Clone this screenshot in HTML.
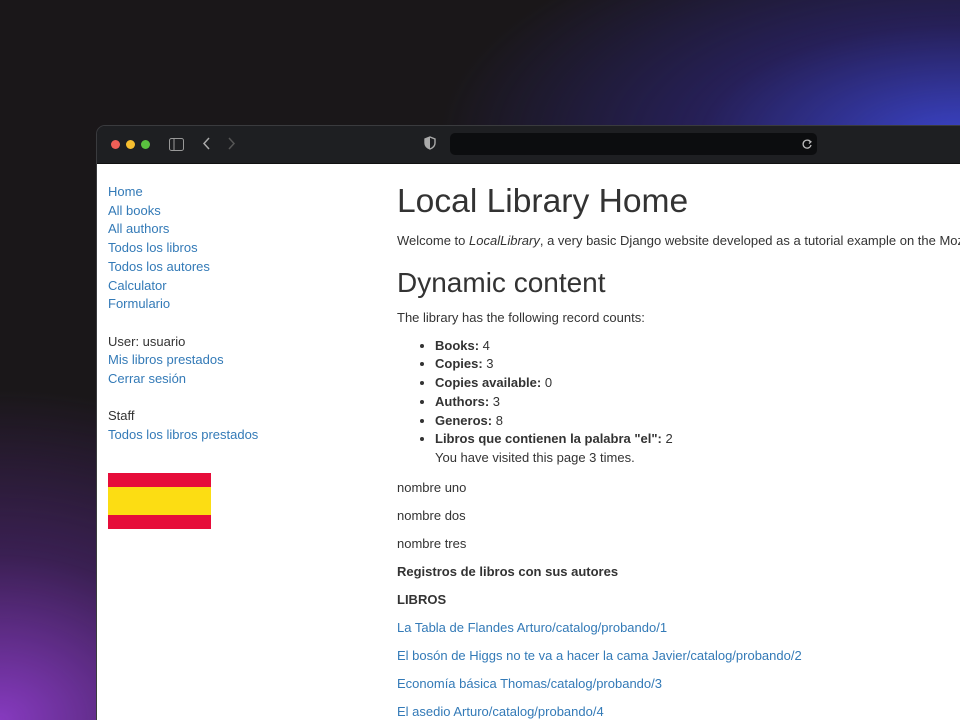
<!DOCTYPE html>
<html><head><meta charset="utf-8"><style>
*{box-sizing:border-box}
html,body{margin:0;width:960px;height:720px;overflow:hidden}
body{font-family:"Liberation Sans",sans-serif;font-size:13px;line-height:18.7px;color:#333;
background:
radial-gradient(ellipse 420px 330px at 0px 720px, rgba(140,60,200,0.95), rgba(90,40,140,0.5) 50%, rgba(0,0,0,0) 100%),
radial-gradient(ellipse 520px 230px at 960px 140px, rgba(60,70,210,0.95), rgba(50,40,150,0.5) 50%, rgba(0,0,0,0) 100%),
#1a1719;position:relative}
.win{position:absolute;left:96px;top:125px;width:880px;height:620px;border-radius:9px 0 0 0;overflow:hidden;border:1px solid #3a3b3e}
.bar{height:38px;background:#1e1f22;position:relative;border-bottom:1px solid #111}
.dot{position:absolute;top:14px;width:9px;height:9px;border-radius:50%}
.url{position:absolute;left:353px;top:7px;width:367px;height:22px;background:#0c0d0f;border-radius:5px}
.content{background:#fff;height:582px;position:relative}
a{color:#337ab7;text-decoration:none}
.side{position:absolute;left:11px;top:19px}
.main{position:absolute;left:300px;top:16px;width:600px}
h1{font-size:33.6px;font-weight:400;margin:0 0 8px;line-height:44px}
h2{font-size:28px;font-weight:400;margin:14px 0 8px;line-height:36px}
p{margin:0 0 9.3px}
ul{margin:0 0 11px;padding-left:38px}
</style></head><body>
<div class="win">
<div class="bar">
<div class="dot" style="left:14px;background:#ee5f57"></div>
<div class="dot" style="left:29px;background:#f6be2f"></div>
<div class="dot" style="left:44px;background:#5ac13f"></div>
<svg style="position:absolute;left:72px;top:12px" width="15" height="13" viewBox="0 0 15 13"><rect x="0.5" y="0.5" width="14" height="12" rx="2" fill="none" stroke="#999"/><line x1="5" y1="1" x2="5" y2="12" stroke="#999"/></svg>
<svg style="position:absolute;left:105px;top:11px" width="10" height="13"><path d="M7 1 L2 6.5 L7 12" fill="none" stroke="#aaa" stroke-width="1.5"/></svg>
<svg style="position:absolute;left:130px;top:11px" width="10" height="13"><path d="M2 1 L7 6.5 L2 12" fill="none" stroke="#555" stroke-width="1.5"/></svg>
<svg style="position:absolute;left:327px;top:10px" width="12" height="14" viewBox="0 0 12 14"><path d="M6 1 L11 3 V7 C11 10 8.5 12 6 13 C3.5 12 1 10 1 7 V3 Z" fill="none" stroke="#aaa" stroke-width="1.4"/><path d="M6 1 V13 C3.5 12 1 10 1 7 V3 Z" fill="#aaa"/></svg>
<div class="url"><svg style="position:absolute;right:4px;top:5px" width="11" height="12"><path d="M8.5 4 A4 4 0 1 0 9 7" fill="none" stroke="#bbb" stroke-width="1.3"/><path d="M6.5 2 L9 3.8 L7 5.6" fill="none" stroke="#bbb" stroke-width="1.2"/></svg></div>
</div>
<div class="content">
<div class="side">
<a>Home</a><br><a>All books</a><br><a>All authors</a><br><a>Todos los libros</a><br><a>Todos los autores</a><br><a>Calculator</a><br><a>Formulario</a><br><br>
User: usuario<br><a>Mis libros prestados</a><br><a>Cerrar sesión</a><br><br>
Staff<br><a>Todos los libros prestados</a>
<div style="margin-top:28px;width:103px;height:56px;background:linear-gradient(#e60d3a 0 25%,#fcdd13 25% 75%,#e60d3a 75%)"></div>
</div>
<div class="main">
<h1>Local Library Home</h1>
<p style="white-space:nowrap">Welcome to <em>LocalLibrary</em>, a very basic Django website developed as a tutorial example on the Mozilla Developer Network.</p>
<h2>Dynamic content</h2>
<p>The library has the following record counts:</p>
<ul>
<li><b>Books:</b> 4</li>
<li><b>Copies:</b> 3</li>
<li><b>Copies available:</b> 0</li>
<li><b>Authors:</b> 3</li>
<li><b>Generos:</b> 8</li>
<li><b>Libros que contienen la palabra "el":</b> 2<br>You have visited this page 3 times.</li>
</ul>
<p>nombre uno</p>
<p>nombre dos</p>
<p>nombre tres</p>
<p><b>Registros de libros con sus autores</b></p>
<p><b>LIBROS</b></p>
<p><a>La Tabla de Flandes Arturo/catalog/probando/1</a></p>
<p><a>El bosón de Higgs no te va a hacer la cama Javier/catalog/probando/2</a></p>
<p><a>Economía básica Thomas/catalog/probando/3</a></p>
<p><a>El asedio Arturo/catalog/probando/4</a></p>
</div>
</div>
</div>
</body></html>
